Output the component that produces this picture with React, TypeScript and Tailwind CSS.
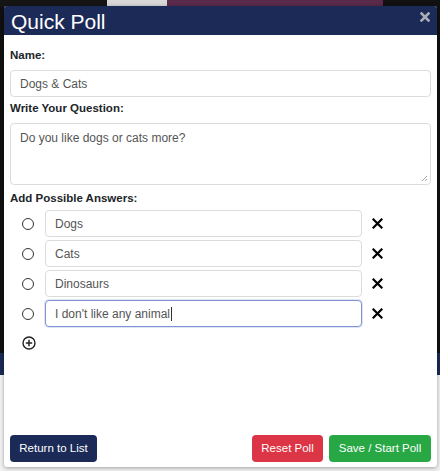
import React from "react";

const answers = ["Dogs", "Cats", "Dinosaurs", "I don't like any animal"];

const RemoveIcon = () => (
  <svg width="11" height="11" viewBox="0 0 11 11" className="text-black">
    <path d="M1.5 1.5 L9.5 9.5 M9.5 1.5 L1.5 9.5" stroke="currentColor" strokeWidth="2.2" strokeLinecap="square" />
  </svg>
);

const AnswerRow = ({ value, focused }: { value: string; focused?: boolean }) => (
  <div className="flex items-center h-[27px]">
    <div className="w-[35px] flex justify-center pl-[1px]">
      <span className="w-[12px] h-[12px] rounded-full border-[1.5px] border-[#333] bg-white" />
    </div>
    <div
      className={
        "w-[317px] h-[27px] rounded-[4px] border bg-white flex items-center pl-[9px] text-[12px] text-[#555] " +
        (focused ? "border-[#7f95d6] shadow-[0_0_0_1px_rgba(127,149,214,0.25)]" : "border-[#dcdcdc]")
      }
    >
      {value}
      {focused && <span className="w-[1px] h-[14px] bg-[#333] ml-[1px]" />}
    </div>
    <div className="w-[31px] flex justify-center">
      <RemoveIcon />
    </div>
  </div>
);

export default function App() {
  return (
    <div className="relative w-[440px] h-[471px] overflow-hidden bg-[#0c0c0c] font-['Liberation_Sans',Arial,sans-serif]">
      {/* page behind the modal */}
      <div className="flex flex-col h-full">
        <div className="flex h-[7px]">
          <div className="w-[107px] bg-[#151515]" />
          <div className="w-[60px] bg-[#d8d8d8]" />
          <div className="w-[216px] bg-[#5a2a4a]" />
          <div className="flex-1 bg-[#111]" />
        </div>
        <div className="flex-1 bg-[#101010]" />
        <div className="h-[22px] bg-[#1b2a56]" />
        <div className="h-[96px] bg-[#f2f2f2]" />
      </div>

      {/* modal */}
      <div className="absolute left-[4px] top-[6px] w-[433px] h-[461px] bg-white rounded-[3px] shadow-[0_1px_4px_rgba(0,0,0,0.35)] flex flex-col overflow-hidden">
        <div className="h-[29px] bg-[#1b2a56] flex items-center justify-between pl-[7px] pr-[7px]">
          <h1 className="text-white text-[21px] leading-none pt-[1px]">Quick Poll</h1>
          <svg width="10" height="10" viewBox="0 0 10 10" className="text-[#a9adb8] -mt-[8px]">
            <path d="M1.5 1.5 L8.5 8.5 M8.5 1.5 L1.5 8.5" stroke="currentColor" strokeWidth="2.6" strokeLinecap="square" />
          </svg>
        </div>

        <div className="flex-1 flex flex-col px-[6px] pt-[11px] pb-[5px]">
          <label className="text-[11.5px] leading-[19px] font-bold text-[#212529]">Name:</label>
          <div className="mt-[5px] h-[27px] rounded-[4px] border border-[#dcdcdc] flex items-center pl-[9px] text-[12px] text-[#555]">
            Dogs &amp; Cats
          </div>

          <label className="mt-[2px] text-[11.5px] leading-[19px] font-bold text-[#212529]">Write Your Question:</label>
          <div className="relative mt-[5px] h-[62px] rounded-[4px] border border-[#dcdcdc] pl-[9px] pt-[6px] text-[12px] leading-[17px] text-[#555]">
            Do you like dogs or cats more?
            <svg width="7" height="7" viewBox="0 0 7 7" className="absolute right-[2px] bottom-[2px] text-[#aaa]">
              <path d="M6 1 L1 6 M6 4 L4 6" stroke="currentColor" strokeWidth="1" />
            </svg>
          </div>

          <label className="mt-[4px] text-[11.5px] leading-[19px] font-bold text-[#212529]">Add Possible Answers:</label>
          <div className="mt-[2px] flex flex-col gap-[3px]">
            {answers.map((a, i) => (
              <AnswerRow key={a} value={a} focused={i === answers.length - 1} />
            ))}
          </div>
          <div className="mt-[9px] pl-[12px]">
            <svg width="14" height="14" viewBox="0 0 14 14" className="text-[#222]">
              <circle cx="7" cy="7" r="6" fill="none" stroke="currentColor" strokeWidth="1.4" />
              <path d="M7 3.8 V10.2 M3.8 7 H10.2" stroke="currentColor" strokeWidth="1.5" />
            </svg>
          </div>

          <div className="mt-auto flex items-center">
            <button className="h-[27px] w-[87px] rounded-[4px] bg-[#1b2a56] text-white text-[11.5px]">Return to List</button>
            <div className="flex-1" />
            <button className="h-[27px] w-[71px] rounded-[4px] bg-[#dc3545] text-white text-[11.5px]">Reset Poll</button>
            <button className="ml-[6px] h-[27px] w-[102px] rounded-[4px] bg-[#28a745] text-white text-[11.5px]">Save / Start Poll</button>
          </div>
        </div>
      </div>
    </div>
  );
}
